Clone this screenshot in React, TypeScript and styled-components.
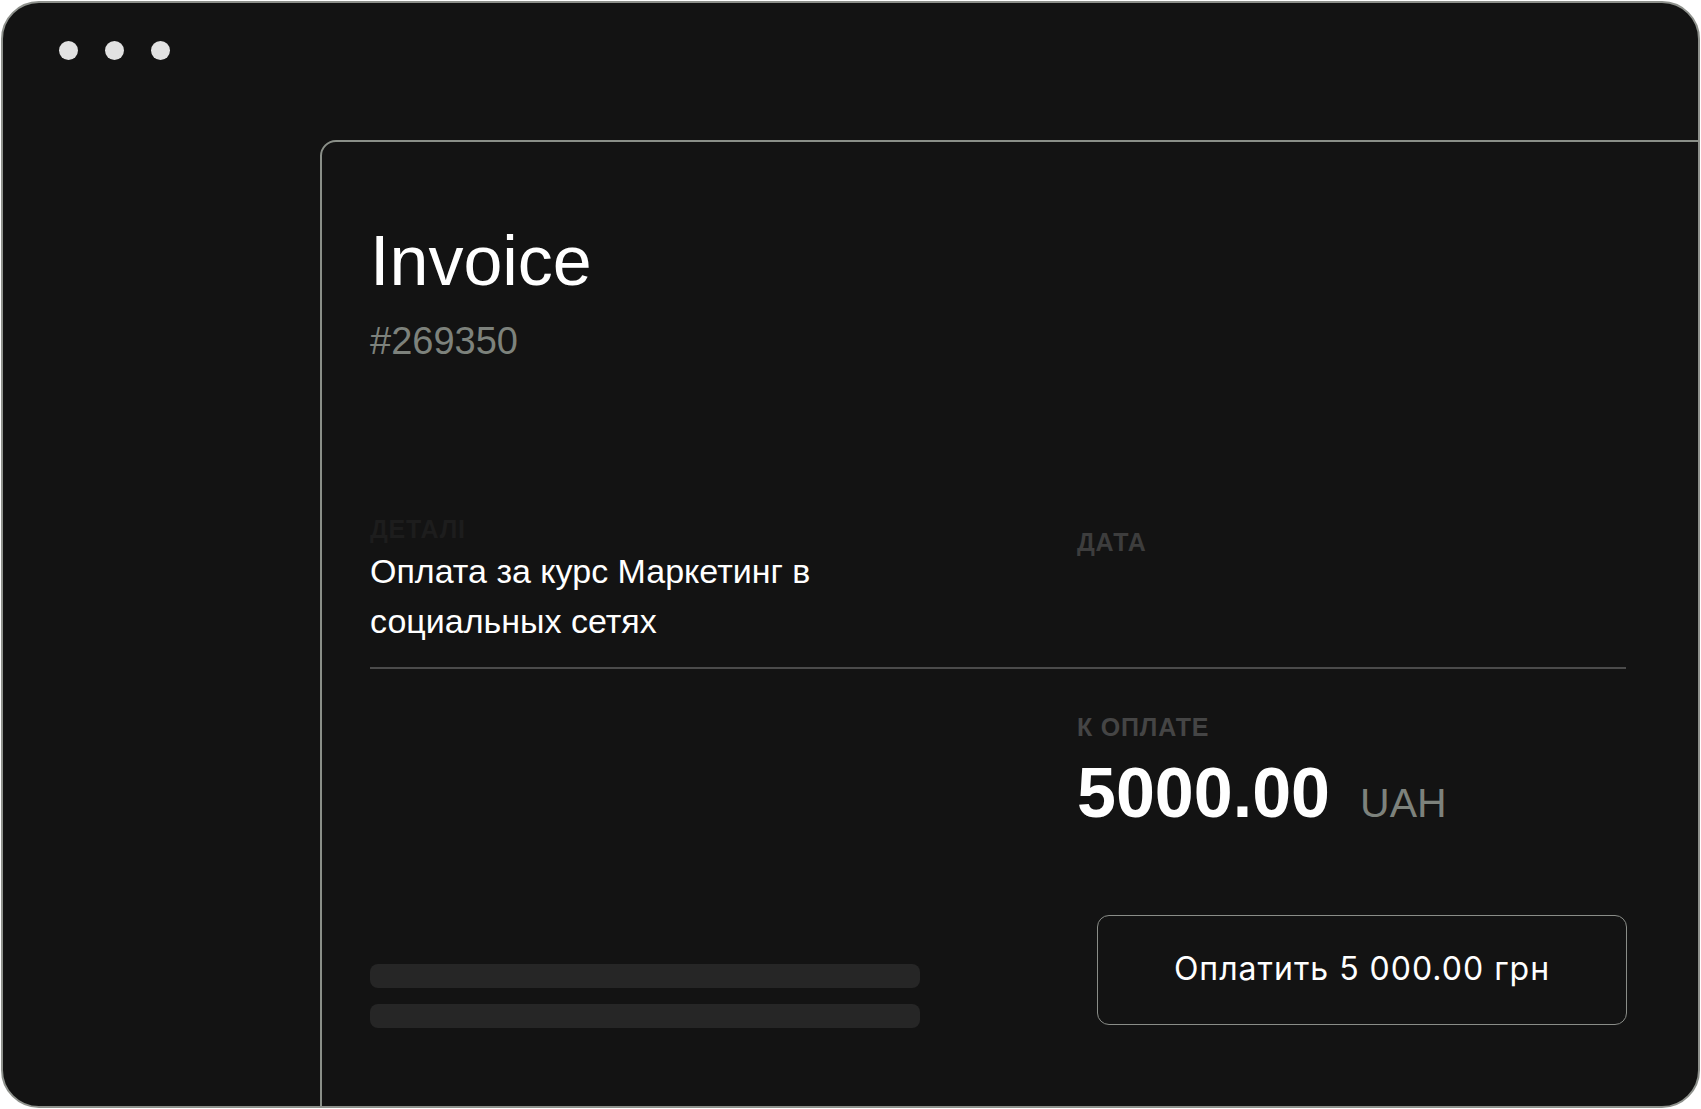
import React from 'react';
import styled, { createGlobalStyle } from 'styled-components';

const GlobalStyle = createGlobalStyle`
  html, body {
    margin: 0;
    padding: 0;
    background: #ffffff;
  }
  body {
    font-family: "Liberation Sans", Arial, sans-serif;
  }
`;

const Frame = styled.div`
  box-sizing: border-box;
  margin: 1px;
  width: 1699px;
  height: 1107px;
  display: flex;
  flex-direction: column;
  background: #131313;
  border: 2px solid #8e918c;
  border-radius: 38px;
  overflow: hidden;
`;

const Dots = styled.div`
  display: flex;
  gap: 27px;
  padding: 38px 0 0 56px;
`;

const Dot = styled.span`
  width: 19px;
  height: 19px;
  border-radius: 50%;
  background: #e2e2e2;
`;

const Card = styled.section`
  box-sizing: border-box;
  flex-shrink: 0;
  align-self: flex-start;
  width: 1520px;
  height: 1000px;
  margin: 80px 0 0 317px;
  padding: 84px 0 0 48px;
  border: 2px solid #8a8f88;
  border-radius: 16px;
`;

const Content = styled.div`
  width: 1256px;
`;

const Title = styled.h1`
  margin: 0;
  font-size: 70px;
  line-height: 70px;
  font-weight: 400;
  color: #ffffff;
`;

const Number = styled.div`
  margin-top: 26px;
  font-size: 38px;
  line-height: 38px;
  color: #7d827c;
`;

const Grid = styled.div<{ $top?: number }>`
  display: grid;
  grid-template-columns: 707px 1fr;
  margin-top: ${({ $top }) => $top ?? 0}px;
`;

const Column = styled.div<{ $padTop?: number }>`
  display: flex;
  flex-direction: column;
  padding-top: ${({ $padTop }) => $padTop ?? 0}px;
`;

const Label = styled.div<{ $tone: string }>`
  font-size: 25px;
  line-height: 25px;
  font-weight: 700;
  letter-spacing: 0.8px;
  text-transform: uppercase;
  color: ${({ $tone }) => $tone};
`;

const Description = styled.p`
  margin: 4px 0 0;
  max-width: 470px;
  font-size: 34px;
  line-height: 50px;
  color: #ffffff;
`;

const Divider = styled.hr`
  margin: 21px 0 0;
  border: 0;
  height: 2px;
  background: #4b4b4b;
`;

const Bottom = styled.div`
  display: grid;
  grid-template-columns: 707px 1fr;
  align-items: end;
  margin-top: 46px;
`;

const Bars = styled.div`
  display: flex;
  flex-direction: column;
  gap: 16px;
`;

const Bar = styled.div`
  width: 550px;
  height: 24px;
  border-radius: 8px;
  background: #262626;
`;

const Amount = styled.div`
  display: flex;
  align-items: baseline;
  gap: 30px;
  margin-top: 18px;
`;

const Sum = styled.span`
  font-size: 70px;
  line-height: 70px;
  font-weight: 700;
  color: #ffffff;
`;

const Currency = styled.span`
  font-size: 41px;
  line-height: 41px;
  color: #7d827c;
`;

const PayButton = styled.button`
  box-sizing: border-box;
  margin: 87px 0 3px 20px;
  width: 530px;
  height: 110px;
  padding: 0 0 4px;
  background: transparent;
  border: 1.5px solid #8a8d88;
  border-radius: 12px;
  font-family: Inter, "Liberation Sans", sans-serif;
  font-size: 32px;
  letter-spacing: 1px;
  color: #ffffff;
  cursor: pointer;
`;

export default function App() {
  return (
    <>
      <GlobalStyle />
      <Frame>
        <Dots>
          <Dot />
          <Dot />
          <Dot />
        </Dots>
        <Card>
          <Content>
            <Title>Invoice</Title>
            <Number>#269350</Number>
            <Grid $top={157}>
              <Column>
                <Label $tone="#1d1d1d">Деталі</Label>
                <Description>Оплата за курс Маркетинг в социальных сетях</Description>
              </Column>
              <Column $padTop={13}>
                <Label $tone="#3d3d3d">Дата</Label>
              </Column>
            </Grid>
            <Divider />
            <Bottom>
              <Bars>
                <Bar />
                <Bar />
              </Bars>
              <Column>
                <Label $tone="#454545">К оплате</Label>
                <Amount>
                  <Sum>5000.00</Sum>
                  <Currency>UAH</Currency>
                </Amount>
                <PayButton>Оплатить 5 000.00 грн</PayButton>
              </Column>
            </Bottom>
          </Content>
        </Card>
      </Frame>
    </>
  );
}
